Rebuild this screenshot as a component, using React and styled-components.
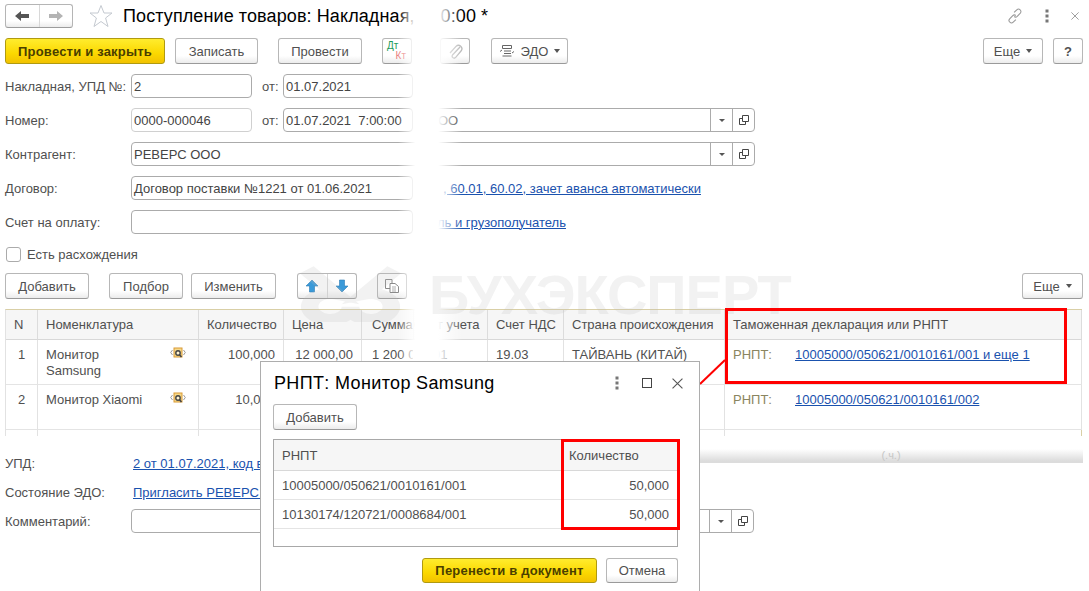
import React from 'react'
import styled, { createGlobalStyle } from 'styled-components'

// STYLE
const Global = createGlobalStyle`
  html, body {
    margin: 0;
    padding: 0;
    background: #fff;
    overflow: hidden;
  }
  body {
    font-family: "Liberation Sans", Arial, sans-serif;
    font-size: 13px;
    color: #505050;
  }
`
const Page = styled.div`
  position: relative;
  width: 1089px;
  height: 591px;
  overflow: hidden;
  background: #fff;
`
const Header = styled.div`
  display: flex;
  align-items: center;
  height: 24px;
  padding: 4px 10px 0 5px;
`
const NavGroup = styled.div`
  display: flex;
  width: 68px;
  height: 24px;
  box-sizing: border-box;
  border: 1px solid #b5b5b5;
  border-bottom-color: #9c9c9c;
  border-radius: 3px;
  background: linear-gradient(#fff 72%, #ececec);
`
const NavCell = styled.div`
  flex: 1;
  align-self: stretch;
  display: flex;
  align-items: center;
  justify-content: center;
  & + & {
    border-left: 1px solid #d8d8d8;
  }
`
const Star = styled.svg`
  margin-left: 16px;
  width: 24px;
  height: 24px;
`
const Title = styled.div`
  margin-left: 10px;
  font-size: 18px;
  letter-spacing: 0.1px;
  color: #000;
  white-space: nowrap;
`
const TitleTail = styled.span`
  margin-left: 26px;
`
const HeaderIcons = styled.div`
  margin-left: auto;
  display: flex;
  align-items: center;
  gap: 22px;
`
const Toolbar = styled.div`
  display: flex;
  height: 26px;
  margin-top: 10px;
  padding: 0 6px 0 5px;
`
const Button = styled.div`
  display: flex;
  align-items: center;
  justify-content: center;
  gap: 6px;
  width: ${(p) => p.$w}px;
  margin-left: ${(p) => p.$ml || 0}px;
  box-sizing: border-box;
  border: 1px solid #b7b7b7;
  border-bottom-color: #9a9a9a;
  border-radius: 3px;
  background: linear-gradient(#fff 70%, #ececec);
  color: #505050;
  white-space: nowrap;
`
const ArrowGroup = styled(Button)`
  gap: 0;
`
const PrimaryButton = styled(Button)`
  border-color: #b09a10;
  background: linear-gradient(#ffec2e, #fbd800 60%, #f2c200);
  color: #4a3e00;
  font-weight: 700;
  letter-spacing: 0.2px;
`
const PushRight = styled.div`
  margin-left: auto;
`
const Caret = styled.span`
  width: 0;
  height: 0;
  border-left: 3.5px solid transparent;
  border-right: 3.5px solid transparent;
  border-top: 4px solid #555;
`
const DebitCredit = styled.div`
  position: relative;
  width: 22px;
  height: 20px;
  font-size: 10px;
  line-height: 10px;
`
const Debit = styled.span`
  position: absolute;
  left: 1px;
  top: 0;
  color: #1e9c5a;
`
const Credit = styled.span`
  position: absolute;
  right: 2px;
  bottom: 0;
  color: #e88080;
`
const Form = styled.div`
  display: flex;
  flex-direction: column;
  gap: 10px;
  margin-top: 10px;
  padding-left: 5px;
`
const Row = styled.div`
  display: flex;
  align-items: center;
  height: 24px;
`
const Label = styled.div`
  width: 126px;
  flex: none;
  white-space: nowrap;
`
const FromLabel = styled.div`
  width: 21px;
  margin-left: 10px;
  flex: none;
`
const Input = styled.div`
  display: flex;
  align-items: center;
  flex: none;
  width: ${(p) => p.$w}px;
  height: 24px;
  margin-left: ${(p) => p.$ml || 0}px;
  box-sizing: border-box;
  padding-left: 2px;
  border: 1px solid ${(p) => (p.$soft ? '#d0d0d0' : '#ababab')};
  border-radius: 4px;
  color: #444;
  white-space: nowrap;
  overflow: hidden;
`
const InputText = styled.div`
  flex: 1;
  padding-left: ${(p) => p.$pl || 0}px;
`
const FieldBtn = styled.div`
  width: 21px;
  height: 100%;
  flex: none;
  display: flex;
  align-items: center;
  justify-content: center;
  border-left: 1px solid #ababab;
`
const SmallCaret = styled(Caret)`
  border-left-width: 3px;
  border-right-width: 3px;
  border-top-width: 3px;
`
const Link = styled.a`
  color: #1a52ae;
  text-decoration: underline;
  white-space: nowrap;
  margin-left: ${(p) => p.$ml || 0}px;
`
const CheckRow = styled.div`
  display: flex;
  align-items: center;
  gap: 6px;
  height: 16px;
  margin: 12px 0 0 6px;
`
const Check = styled.div`
  width: 15px;
  height: 15px;
  box-sizing: border-box;
  border: 1px solid #ababab;
  border-radius: 3px;
`
const TableBar = styled(Toolbar)`
  margin-top: 11px;
`
const Table = styled.div`
  display: grid;
  grid-template-columns: 32px 161px 85px 78px 52px 74px 76px 161px 357px;
  grid-template-rows: 30px 45px 45px 6px;
  width: 1077px;
  margin: 10px 0 0 5px;
  border-top: 1px solid #d9cfa6;
  border-left: 1px solid #e2e2e2;
  box-sizing: border-box;
`
const HeadCell = styled.div`
  display: flex;
  align-items: center;
  padding-left: ${(p) => p.$pl ?? 8}px;
  background: #f6f6f6;
  border-right: 1px solid #dcdcdc;
  border-bottom: 1px solid #d8d8d8;
  white-space: nowrap;
  overflow: hidden;
`
const Cell = styled.div`
  display: flex;
  align-items: flex-start;
  justify-content: ${(p) => (p.$right ? 'flex-end' : 'flex-start')};
  padding: 7px ${(p) => (p.$right ? 8 : 0)}px 0 ${(p) => (p.$right ? 0 : p.$pl ?? 8)}px;
  line-height: 16px;
  border-right: 1px solid ${(p) => (p.$open ? 'transparent' : '#e2e2e2')};
  border-bottom: 1px solid #e4e4e4;
  color: #505050;
  white-space: nowrap;
  overflow: hidden;
`
const NameCell = styled(Cell)`
  justify-content: space-between;
  padding-right: 12px;
  white-space: normal;
`
const NumCell = styled(Cell)`
  justify-content: center;
  padding-left: 0;
`
const StubCell = styled.div`
  border-right: 1px solid #e2e2e2;
  &:last-child {
    border-right-color: #d9cfa6;
  }
`
const RefLabel = styled.span`
  width: 62px;
  color: #8a8560;
`
const Bottom = styled.div`
  margin-top: 15px;
  padding-left: 5px;
`
const BottomRow = styled.div`
  display: flex;
  height: ${(p) => p.$h || 29}px;
  line-height: 26px;
`
const BottomLabel = styled(Label)`
  width: 128px;
`
const Band = styled.div`
  margin: -2px 6px 0 auto;
  width: 384px;
  height: 14px;
  background: linear-gradient(#fff, #dcdcdc 85%);
  color: #c6c6c6;
  font-size: 11px;
  line-height: 12px;
  text-align: center;
`

// OVERLAYS
const Fade = styled.div`
  position: absolute;
  left: 398px;
  top: 0;
  width: 64px;
  height: 362px;
  background: linear-gradient(90deg, rgba(255, 255, 255, 0), #fff 27%, #fff 63%, rgba(255, 255, 255, 0));
`
const Watermark = styled.div`
  position: absolute;
  left: 429px;
  top: 265px;
  font-size: 56px;
  line-height: 60px;
  font-weight: 700;
  color: rgba(190, 190, 190, 0.2);
  letter-spacing: -1px;
  white-space: nowrap;
`
const WatermarkLogo = styled.svg`
  position: absolute;
  left: 298px;
  top: 266px;
`
const RedBox = styled.div`
  position: absolute;
  left: ${(p) => p.$x}px;
  top: ${(p) => p.$y}px;
  width: ${(p) => p.$w}px;
  height: ${(p) => p.$h}px;
  box-sizing: border-box;
  border: 3px solid #f00;
  pointer-events: none;
`
const Connector = styled.svg`
  position: absolute;
  left: 698px;
  top: 358px;
`
const Dialog = styled.div`
  position: absolute;
  left: 260px;
  top: 361px;
  width: 440px;
  height: 240px;
  box-sizing: border-box;
  padding: 0 21px 0 12px;
  background: #fff;
  border: 1px solid #adadad;
`
const DialogHead = styled.div`
  display: flex;
  align-items: center;
  height: 42px;
`
const DialogTitle = styled.div`
  margin-left: 1px;
  font-size: 18px;
  letter-spacing: 0.35px;
  color: #000;
  white-space: nowrap;
`
const DialogIcons = styled.div`
  display: flex;
  align-items: center;
  margin-left: auto;
  margin-right: -5px;
  gap: 20px;
`
const DotsSlot = styled.div`
  display: flex;
  margin-right: 3px;
`
const DialogBar = styled.div`
  display: flex;
  height: 26px;
`
const MiniTable = styled.div`
  display: grid;
  grid-template-columns: 287px 1fr;
  grid-template-rows: 31px 29px 29px 1fr;
  height: 108px;
  margin-top: 9px;
  box-sizing: border-box;
  border: 1px solid #a8a8a8;
`
const MiniHead = styled.div`
  display: flex;
  align-items: center;
  padding-left: 8px;
  background: #f6f6f6;
  border-bottom: 1px solid #d8d8d8;
`
const MiniCell = styled.div`
  display: flex;
  align-items: center;
  justify-content: ${(p) => (p.$right ? 'flex-end' : 'flex-start')};
  padding: 0 8px;
  border-bottom: 1px solid #e4e4e4;
  color: #505050;
`
const DialogFooter = styled.div`
  display: flex;
  justify-content: flex-end;
  gap: 9px;
  height: 25px;
  margin-top: 11px;
`

// ICONS
const ArrowLeft = () => (
  <svg width="16" height="12" viewBox="0 0 16 12">
    <path d="M1 6 L7 1 V4 H15 V8 H7 V11 Z" fill="#555" />
  </svg>
)
const ArrowRight = () => (
  <svg width="16" height="12" viewBox="0 0 16 12">
    <path d="M15 6 L9 1 V4 H1 V8 H9 V11 Z" fill="#b4b4b4" />
  </svg>
)
const Clip = () => (
  <svg width="16" height="18" viewBox="0 0 16 18" fill="none" stroke="#b9b9b9" strokeWidth="1.3">
    <path d="M13 5 L5.5 13 a2 2 0 0 0 3 2.6 L14 9 a3.4 3.4 0 0 0 -5 -4.6 L3 11" />
  </svg>
)
const EdoIcon = () => (
  <svg width="16" height="16" viewBox="0 0 16 16" fill="none" stroke="#666" strokeWidth="1">
    <path d="M3.5 2.5 H12.5 V5.5 H3.5 Z M5 8 H12 M5 10.5 H12 M3.5 13 H12.5 M1 8.5 L3 7 M13 10 L15 8.5" />
  </svg>
)
const LinkIcon = () => (
  <svg width="16" height="16" viewBox="0 0 18 18" fill="none" stroke="#999" strokeWidth="1.2">
    <path d="M8 5 L11 2.2 a2.6 2.6 0 0 1 4 3.6 L11.5 9.4 a2.6 2.6 0 0 1 -3.4 0.2" />
    <path d="M10 13 L7 15.8 a2.6 2.6 0 0 1 -4 -3.6 L6.5 8.6 a2.6 2.6 0 0 1 3.4 -0.2" />
  </svg>
)
const Dots = () => (
  <svg width="4" height="14" viewBox="0 0 4 14">
    <g fill="#777">
      <rect x="0.5" y="0.5" width="3" height="3" />
      <rect x="0.5" y="5.5" width="3" height="3" />
      <rect x="0.5" y="10.5" width="3" height="3" />
    </g>
  </svg>
)
const Close = ({ size = 8, color = '#888' }) => (
  <svg width={size} height={size} viewBox="0 0 10 10" stroke={color} strokeWidth="1">
    <path d="M0.5 0.5 L9.5 9.5 M9.5 0.5 L0.5 9.5" />
  </svg>
)
const Square = () => (
  <svg width="10" height="10" viewBox="0 0 10 10" fill="none" stroke="#444">
    <rect x="0.5" y="0.5" width="9" height="9" />
  </svg>
)
const OpenIcon = () => (
  <svg width="10" height="10" viewBox="0 0 10 10" fill="none" stroke="#444">
    <path d="M3.5 0.5 H9.5 V6.5 H3.5 Z M3.5 3.5 H0.5 V9.5 H6.5 V6.5" />
  </svg>
)
const BlueArrow = ({ down }) => (
  <svg width="14" height="14" viewBox="0 0 14 14" style={down ? { transform: 'rotate(180deg)' } : undefined}>
    <path d="M7 1 L13 7 H9.5 V13 H4.5 V7 H1 Z" fill="#3a9ad9" stroke="#2b7cb5" strokeWidth="0.6" />
  </svg>
)
const CopyIcon = () => (
  <svg width="16" height="16" viewBox="0 0 16 16" fill="#fff" stroke="#8a8a8a">
    <path d="M1.5 1.5 H8 V10.5 H1.5 Z" />
    <path d="M6 5.5 H11 L14.5 8.5 V14.5 H6 Z" />
    <path d="M8 9 H12 M8 11 H12 M8 13 H12" strokeWidth="0.7" />
  </svg>
)
const PickIcon = () => (
  <svg width="16" height="12" viewBox="0 0 16 12" fill="none">
    <path d="M2.5 3 L0.7 5.5 L2.5 8 M13.5 3 L15.3 5.5 L13.5 8" stroke="#9a9a9a" />
    <rect x="4" y="1" width="8" height="9" fill="#f6d98a" stroke="#d99a35" />
    <circle cx="8" cy="6" r="2.2" stroke="#444" strokeWidth="1.4" fill="#fff3cf" />
    <path d="M9.5 7.8 L11.5 10" stroke="#444" strokeWidth="1.6" />
  </svg>
)

const App = () => {
  return (
    <Page>
      <Global />
      <Header>
        <NavGroup>
          <NavCell>
            <ArrowLeft />
          </NavCell>
          <NavCell>
            <ArrowRight />
          </NavCell>
        </NavGroup>
        <Star viewBox="0 0 24 24" fill="none" stroke="#c4c9d0">
          <path d="M12 1.5 L15 9 H23 L16.6 14 L19 22.5 L12 17.5 L5 22.5 L7.4 14 L1 9 H9 Z" />
        </Star>
        <Title>
          Поступление товаров: Накладная,
          <TitleTail>0:00 *</TitleTail>
        </Title>
        <HeaderIcons>
          <LinkIcon />
          <Dots />
          <Close />
        </HeaderIcons>
      </Header>

      <Toolbar>
        <PrimaryButton $w={160}>Провести и закрыть</PrimaryButton>
        <Button $w={83} $ml={10}>Записать</Button>
        <Button $w={84} $ml={20}>Провести</Button>
        <Button $w={30} $ml={20}>
          <DebitCredit>
            <Debit>Дт</Debit>
            <Credit>Кт</Credit>
          </DebitCredit>
        </Button>
        <Button $w={30} $ml={28}>
          <Clip />
        </Button>
        <Button $w={77} $ml={21}>
          <EdoIcon />
          ЭДО
          <Caret />
        </Button>
        <PushRight />
        <Button $w={60}>
          Еще
          <Caret />
        </Button>
        <Button $w={30} $ml={10}>
          <b>?</b>
        </Button>
      </Toolbar>

      <Form>
        <Row>
          <Label>Накладная, УПД №:</Label>
          <Input $w={121}>2</Input>
          <FromLabel>от:</FromLabel>
          <Input $w={130}>01.07.2021</Input>
        </Row>
        <Row>
          <Label>Номер:</Label>
          <Input $w={121} $soft>0000-000046</Input>
          <FromLabel>от:</FromLabel>
          <Input $w={130}>01.07.2021&nbsp; 7:00:00</Input>
          <Input $w={330} $ml={12}>
            <InputText $pl={10}>ОО</InputText>
            <FieldBtn>
              <SmallCaret />
            </FieldBtn>
            <FieldBtn>
              <OpenIcon />
            </FieldBtn>
          </Input>
        </Row>
        <Row>
          <Label>Контрагент:</Label>
          <Input $w={624}>
            <InputText>РЕВЕРС ООО</InputText>
            <FieldBtn>
              <SmallCaret />
            </FieldBtn>
            <FieldBtn>
              <OpenIcon />
            </FieldBtn>
          </Input>
        </Row>
        <Row>
          <Label>Договор:</Label>
          <Input $w={282}>Договор поставки №1221 от 01.06.2021</Input>
          <Link $ml={30}>, 60.01, 60.02, зачет аванса автоматически</Link>
        </Row>
        <Row>
          <Label>Счет на оплату:</Label>
          <Input $w={282} />
          <Link $ml={24}>ль и грузополучатель</Link>
        </Row>
      </Form>

      <CheckRow>
        <Check />
        Есть расхождения
      </CheckRow>

      <TableBar>
        <Button $w={84}>Добавить</Button>
        <Button $w={74} $ml={20}>Подбор</Button>
        <Button $w={85} $ml={8}>Изменить</Button>
        <ArrowGroup $w={60} $ml={21}>
          <NavCell>
            <BlueArrow />
          </NavCell>
          <NavCell>
            <BlueArrow down />
          </NavCell>
        </ArrowGroup>
        <Button $w={30} $ml={20}>
          <CopyIcon />
        </Button>
        <PushRight />
        <Button $w={61}>
          Еще
          <Caret />
        </Button>
      </TableBar>

      <Table>
        <HeadCell>N</HeadCell>
        <HeadCell>Номенклатура</HeadCell>
        <HeadCell>Количество</HeadCell>
        <HeadCell>Цена</HeadCell>
        <HeadCell $pl={10}>Сумма</HeadCell>
        <HeadCell $pl={0}>Счет учета</HeadCell>
        <HeadCell>Счет НДС</HeadCell>
        <HeadCell>Страна происхождения</HeadCell>
        <HeadCell>Таможенная декларация или РНПТ</HeadCell>

        <NumCell>1</NumCell>
        <NameCell>
          <span>
            Монитор
            <br />
            Samsung
          </span>
          <PickIcon />
        </NameCell>
        <Cell $right>100,000</Cell>
        <Cell $right>12 000,00</Cell>
        <Cell $open $pl={10}>1 200 000</Cell>
        <Cell $pl={1}>41.01</Cell>
        <Cell>19.03</Cell>
        <Cell>ТАЙВАНЬ (КИТАЙ)</Cell>
        <Cell>
          <RefLabel>РНПТ:</RefLabel>
          <Link>10005000/050621/0010161/001 и еще 1</Link>
        </Cell>

        <NumCell>2</NumCell>
        <NameCell>
          <span>Монитор Xiaomi</span>
          <PickIcon />
        </NameCell>
        <Cell $right>10,000</Cell>
        <Cell $right>12 000,00</Cell>
        <Cell $open $pl={10}>120 000</Cell>
        <Cell $pl={1}>41.01</Cell>
        <Cell>19.03</Cell>
        <Cell>КИТАЙ</Cell>
        <Cell>
          <RefLabel>РНПТ:</RefLabel>
          <Link>10005000/050621/0010161/002</Link>
        </Cell>

        <StubCell />
        <StubCell />
        <StubCell />
        <StubCell />
        <StubCell />
        <StubCell />
        <StubCell />
        <StubCell />
        <StubCell />
      </Table>

      <Bottom>
        <BottomRow>
          <BottomLabel>УПД:</BottomLabel>
          <Link>2 от 01.07.2021, код вида операции 01</Link>
          <Band>(.ч.)</Band>
        </BottomRow>
        <BottomRow>
          <BottomLabel>Состояние ЭДО:</BottomLabel>
          <Link>Пригласить РЕВЕРС ООО к обмену</Link>
        </BottomRow>
        <Row>
          <Label>Комментарий:</Label>
          <Input $w={623}>
            <InputText />
            <FieldBtn>
              <SmallCaret />
            </FieldBtn>
            <FieldBtn>
              <OpenIcon />
            </FieldBtn>
          </Input>
        </Row>
      </Bottom>

      <Fade />
      <WatermarkLogo width="105" height="56" viewBox="0 0 72 60" preserveAspectRatio="none" fill="none" stroke="rgba(190,190,190,0.2)" strokeWidth="12">
        <path d="M6 4 L26 30 A14 14 0 1 0 36 44 A14 14 0 1 0 46 30 L66 4" />
      </WatermarkLogo>
      <Watermark>БУХЭКСПЕРТ</Watermark>

      <RedBox $x={725} $y={308} $w={342} $h={76} />
      <Connector width="30" height="30" viewBox="0 0 30 30" stroke="#f00" strokeWidth="2">
        <path d="M2 26 L27 2" />
      </Connector>

      <Dialog>
        <DialogHead>
          <DialogTitle>РНПТ: Монитор Samsung</DialogTitle>
          <DialogIcons>
            <DotsSlot>
              <Dots />
            </DotsSlot>
            <Square />
            <Close size={11} color="#555" />
          </DialogIcons>
        </DialogHead>
        <DialogBar>
          <Button $w={84}>Добавить</Button>
        </DialogBar>
        <MiniTable>
          <MiniHead>РНПТ</MiniHead>
          <MiniHead>Количество</MiniHead>
          <MiniCell>10005000/050621/0010161/001</MiniCell>
          <MiniCell $right>50,000</MiniCell>
          <MiniCell>10130174/120721/0008684/001</MiniCell>
          <MiniCell $right>50,000</MiniCell>
        </MiniTable>
        <DialogFooter>
          <PrimaryButton $w={175}>Перенести в документ</PrimaryButton>
          <Button $w={72}>Отмена</Button>
        </DialogFooter>
      </Dialog>
      <RedBox $x={561} $y={439} $w={119} $h={91} />
    </Page>
  )
}

export default App
